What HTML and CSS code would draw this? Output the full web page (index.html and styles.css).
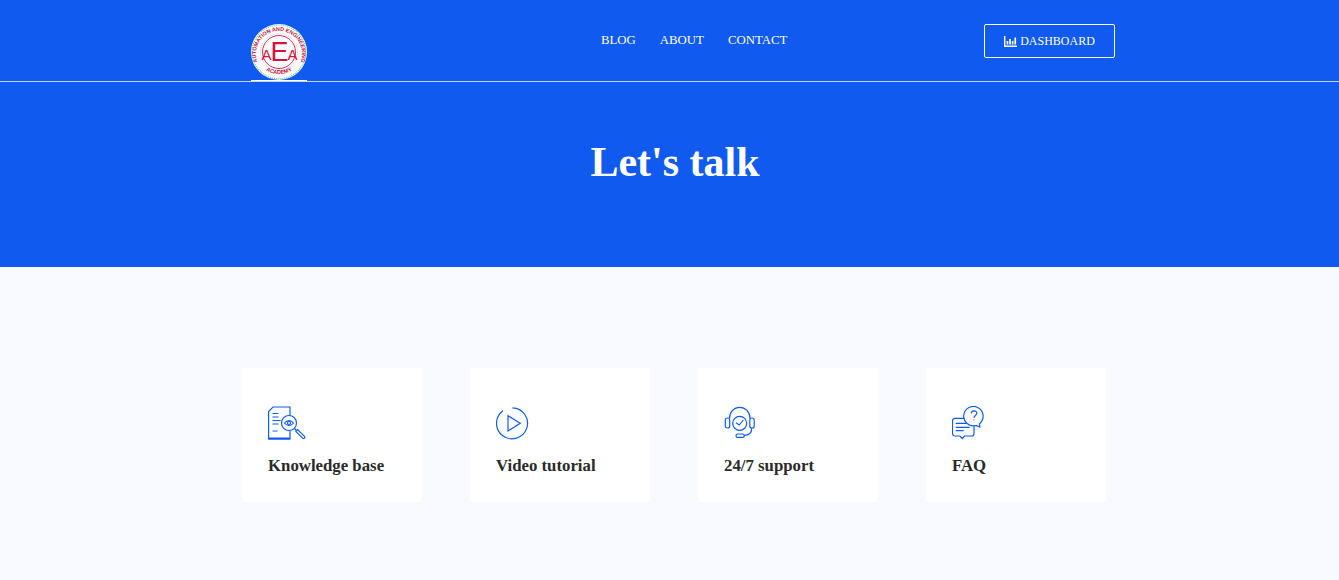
FILE: index.html
```html
<!DOCTYPE html>
<html lang="en">

<head>
    <meta charset="UTF-8" />
    <meta name="viewport" content="width=device-width, initial-scale=1.0" />
    <title>Let's talk</title>
    <link rel="stylesheet" href="styles.css">
</head>

<body>
    <header class="site-header">
        <a class="logo" href="#">
            <svg width="56" height="56" viewBox="0 0 56 56">
                <defs>
                    <path id="arcTop" d="M6.500 38A23 23 0 1 1 49.500 38" />
                    <path id="arcBottom" d="M12 44A24 24 0 0 0 44 44" />
                </defs>
                <circle cx="28" cy="28" r="28" fill="#fff" />
                <circle cx="28" cy="28" r="26.800" fill="none" stroke="#6cc6a0" stroke-width="1.200" stroke-dasharray="1 1" />
                <circle cx="28" cy="28" r="18.500" fill="none" stroke="#8fd3b4" stroke-width="0.800" stroke-dasharray="1 1" />
                <circle cx="28" cy="28" r="16.500" fill="none" stroke="#e0103f" stroke-width="0.900" />
                <text class="logo-ring" fill="#c4103c"><textPath href="#arcTop" startOffset="50%" text-anchor="middle">AUTOMATION AND ENGINEERING</textPath></text>
                <text class="logo-ring" fill="#c4103c"><textPath href="#arcBottom" startOffset="50%" text-anchor="middle">ACADEMY</textPath></text>
                <text class="logo-mark" x="28" y="36" text-anchor="middle" fill="#d8103f">A<tspan class="logo-mark-mid" dy="1">E</tspan><tspan dy="-1">A</tspan></text>
            </svg>
        </a>
        <nav class="main-nav">
            <a href="#">BLOG</a>
            <a href="#">ABOUT</a>
            <a href="#">CONTACT</a>
        </nav>
        <a class="dash-btn" href="#">
            <svg width="13" height="11" viewBox="0 0 13 11" fill="#fff">
                <path d="M0 0h1.400v9.600H13V11H0z" />
                <path d="M2.600 5h1.700v3.600H2.600zM5.200 3h1.700v5.600H5.200zM7.800 5h1.700v3.600H7.800zM10.400 1.500h1.700v7.100h-1.700z" />
            </svg>
            DASHBOARD
        </a>
    </header>

    <section class="hero">
        <h1>Let's talk</h1>
    </section>

    <section class="cards">
        <div class="card">
            <svg class="card-icon" width="40" height="36" viewBox="0 0 40 36">
                <path d="M22 25v8H.6V5.500L5 1h17v8.500" />
                <path d="M.6 32.500H22" stroke-width="2" />
                <path d="M4.500 7.500h6M4.500 11h6M4.500 14.500h8M4.500 18h6M4.500 25h5" />
                <circle cx="21" cy="17" r="7.500" />
                <path d="M16.500 17c2.500-3.200 6.500-3.200 9 0-2.500 3.200-6.500 3.200-9 0z" />
                <circle cx="21" cy="17" r="1.500" />
                <path d="M26.500 22.500l2 2" />
                <path d="M27.800 25.300l1.800-1.800 6.800 6.800c.5.500.5 1.300 0 1.800s-1.300.5-1.800 0z" />
            </svg>
            <h3>Knowledge base</h3>
        </div>
        <div class="card">
            <svg class="card-icon" width="40" height="36" viewBox="0 0 40 36">
                <path d="M16.500 1.800A15.500 15.500 0 1 1 7 4.700" />
                <path d="M12 9.700V25l12.300-7.700z" />
            </svg>
            <h3>Video tutorial</h3>
        </div>
        <div class="card">
            <svg class="card-icon" width="40" height="36" viewBox="0 0 40 36">
                <path d="M5.500 12.500C5.500 6 10 1.300 15.700 1.300S26 6 26 12.500" />
                <rect x="1.300" y="12" width="4.400" height="10" rx="2" />
                <rect x="25.800" y="12" width="4.400" height="10" rx="2" />
                <circle cx="15.700" cy="17.300" r="7" />
                <path d="M12 16.700l3.300 2.300 4-5" />
                <path d="M27.700 22.300c0 4-2.500 7-7.400 7" />
                <rect x="12" y="28" width="8.300" height="3.300" rx="1.600" />
            </svg>
            <h3>24/7 support</h3>
        </div>
        <div class="card">
            <svg class="card-icon" width="40" height="36" viewBox="0 0 40 36">
                <path d="M12.500 12.300H3a2.500 2.500 0 0 0-2.500 2.500v12.500A2.500 2.500 0 0 0 3 30h5l2.300 2.500 2.200-2.500h7A2.500 2.500 0 0 0 22 27.500v-8" />
                <path d="M3.700 17.300h11M3.700 21.300h14M3.700 24.700h8" />
                <path d="M27.500 17.700a9.700 9.700 0 1 0-3.500 1.800l3.800 1.500z" />
                <path d="M19.300 7.500c.2-3.400 5.500-3.400 5.500-.2 0 2.300-2.800 2-2.800 4.500" />
                <path d="M22 13.500v.8" />
            </svg>
            <h3>FAQ</h3>
        </div>
    </section>
</body>

</html>
```

FILE: styles.css
```css
* {
    box-sizing: border-box;
}

body {
    margin: 0;
    background-color: #f9faff;
    font-family: "Liberation Serif", serif;
    color: #2a2a2a;
}

a {
    color: #fff;
    text-decoration: none;
}

.site-header {
    display: flex;
    align-items: flex-start;
    height: 82px;
    padding: 24px 224px 0 251px;
    background-color: #105af0;
    border-bottom: 1px solid rgba(255, 255, 255, 0.75);
}

.logo {
    display: block;
    width: 56px;
    height: 57px;
    border-bottom: 1px solid #fff;
}

.logo svg {
    display: block;
}

.logo-ring {
    font-family: "Liberation Sans", sans-serif;
    font-size: 5.400px;
    font-weight: 700;
}

.logo-mark {
    font-family: "Liberation Sans", sans-serif;
    font-size: 15px;
    letter-spacing: -1px;
}

.logo-mark-mid {
    font-size: 27px;
}

.main-nav {
    display: flex;
    gap: 24px;
    margin-left: 294px;
    padding-top: 9px;
    font-size: 12.800px;
    line-height: 15px;
}

.dash-btn {
    display: flex;
    align-items: center;
    justify-content: center;
    gap: 3px;
    width: 131px;
    height: 34px;
    margin-left: auto;
    border: 1px solid #fff;
    border-radius: 2px;
    font-size: 12px;
}

.hero {
    height: 185px;
    padding: 54px 0 0 11px;
    background-color: #105af0;
    text-align: center;
}

.hero h1 {
    margin: 0;
    color: #fff;
    font-size: 42px;
    line-height: 52px;
    font-weight: 700;
}

.cards {
    display: flex;
    gap: 48px;
    padding: 101px 0 78px 242px;
}

.card {
    width: 180px;
    height: 134px;
    padding: 38px 26px 0;
    background-color: #fff;
}

.card-icon {
    display: block;
    fill: none;
    stroke: #105af0;
    stroke-width: 1.200;
}

.card h3 {
    margin: 14px 0 0;
    font-size: 16.800px;
    line-height: 20px;
    font-weight: 700;
}
```
